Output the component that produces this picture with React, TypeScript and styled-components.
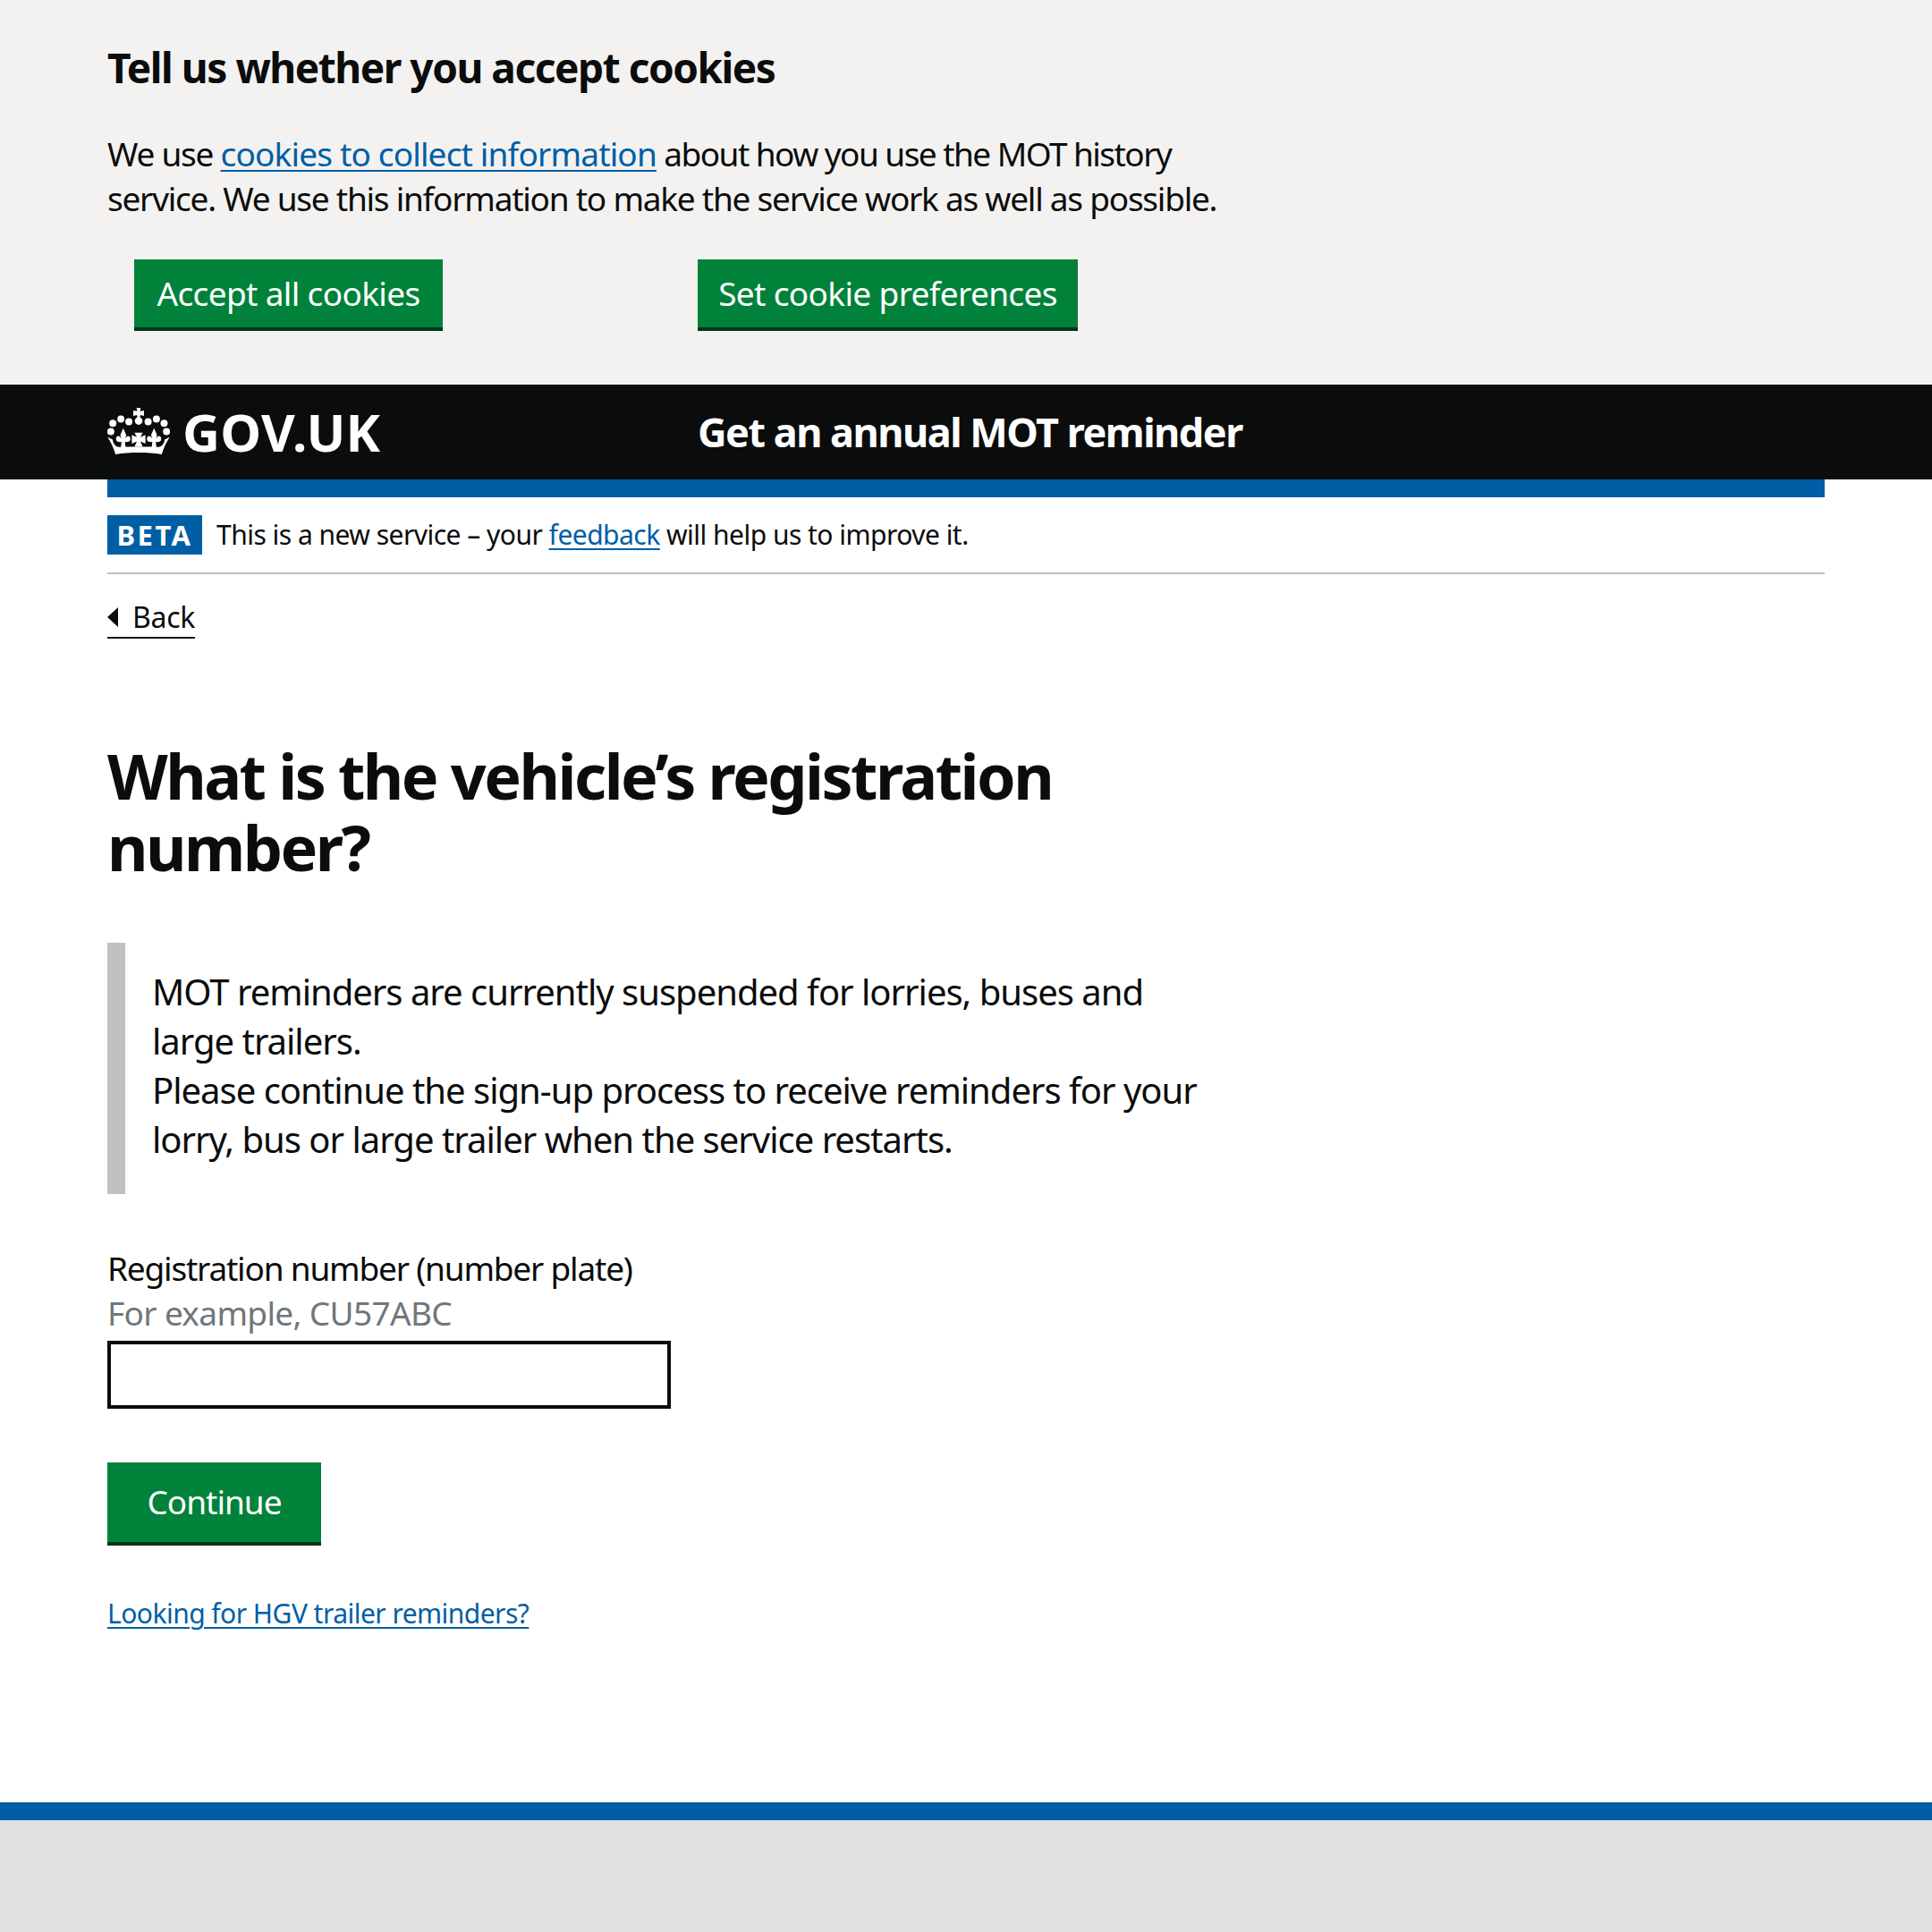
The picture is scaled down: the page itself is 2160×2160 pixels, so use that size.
import { createGlobalStyle, styled } from "styled-components";

const colors = {
	text: "#0b0c0c",
	link: "#005ea5",
	green: "#00823b",
	greenDark: "#003618",
	grey: "#6f777b",
	border: "#bfc1c3",
	panel: "#f3f2f1",
	footer: "#dee0e2",
};

const GlobalStyle = createGlobalStyle`
	html, body {
		margin: 0;
		padding: 0;
		background: #fff;
		color: ${colors.text};
		font-family: "Noto Sans", "Open Sans", sans-serif;
	}
	* {
		box-sizing: border-box;
	}
`;

const Page = styled.div`
	width: 2160px;
	height: 2160px;
	overflow: hidden;
	display: flex;
	flex-direction: column;
`;

const CookieBanner = styled.section`
	height: 430px;
	padding: 48px 120px 0;
	background: ${colors.panel};
`;

const CookieTitle = styled.h2`
	margin: 0 0 44px;
	font-size: 46px;
	line-height: 55px;
	font-weight: 700;
	letter-spacing: -1.46px;
`;

const CookieText = styled.p`
	margin: 0 0 43px;
	width: 1300px;
	font-size: 37px;
	line-height: 50px;
	letter-spacing: -1.24px;
`;

const TextLink = styled.a`
	color: ${colors.link};
	text-decoration: underline;
	text-decoration-thickness: 2px;
	text-underline-offset: 4px;
`;

const CookieLink = styled(TextLink)`
	letter-spacing: -0.84px;
`;

const CookieTextTight = styled.span`
	letter-spacing: -1.55px;
`;

const CookieButtons = styled.div`
	display: flex;
	gap: 285px;
	padding-left: 30px;
`;

const Button = styled.button<{ $width: number; $tall?: boolean }>`
	width: ${(p) => p.$width}px;
	height: ${(p) => (p.$tall ? "93px" : "80px")};
	padding: 0 0 2px;
	border: 0;
	border-bottom: 4px solid ${colors.greenDark};
	background: ${colors.green};
	color: #fff;
	font-family: inherit;
	font-size: 37px;
	letter-spacing: ${(p) => (p.$tall ? "-1px" : "-0.65px")};
`;

const Header = styled.header`
	height: 106px;
	padding: 0 120px 2px;
	display: flex;
	align-items: center;
	background: ${colors.text};
	color: #fff;
`;

const Logo = styled.div`
	width: 660px;
	display: flex;
	align-items: center;
	gap: 14px;
	font-size: 58px;
	font-weight: 700;
	letter-spacing: 0.3px;
	svg {
		width: 70px;
		height: 52px;
	}
`;

const ServiceName = styled.div`
	font-size: 45px;
	font-weight: 700;
	letter-spacing: -1.5px;
`;

const Main = styled.main`
	flex: 1;
	padding: 0 120px;
`;

const BlueRule = styled.div`
	height: 20px;
	background: ${colors.link};
`;

const PhaseBanner = styled.div`
	height: 86px;
	padding-top: 20px;
	display: flex;
	align-items: flex-start;
	gap: 16px;
	border-bottom: 2px solid ${colors.border};
	font-size: 30px;
	line-height: 44px;
	letter-spacing: -0.52px;
`;

const PhaseTag = styled.strong`
	width: 106px;
	height: 44px;
	background: ${colors.link};
	color: #fff;
	font-size: 31px;
	text-align: center;
	letter-spacing: 2.5px;
`;

const BackLink = styled.a`
	display: inline-flex;
	align-items: center;
	gap: 16px;
	margin-top: 24px;
	height: 48px;
	border-bottom: 2px solid ${colors.text};
	font-size: 32px;
	letter-spacing: -0.3px;
	&::before {
		content: "";
		margin-top: 2px;
		border-style: solid;
		border-width: 11px 12px 11px 0;
		border-color: transparent ${colors.text} transparent transparent;
	}
`;

const Title = styled.h1`
	margin: 113px 0 67px;
	width: 1200px;
	font-size: 70px;
	line-height: 80px;
	font-weight: 700;
	letter-spacing: -2.5px;
`;

const Inset = styled.div`
	width: 1240px;
	height: 281px;
	padding: 27px 0 0 30px;
	border-left: 20px solid ${colors.border};
	font-size: 40px;
	line-height: 55px;
	letter-spacing: -1px;
`;

const Label = styled.label`
	display: block;
	margin-top: 58px;
	font-size: 37px;
	line-height: 50px;
	letter-spacing: -1.2px;
`;

const Hint = styled.div`
	color: ${colors.grey};
	font-size: 37px;
	line-height: 50px;
	letter-spacing: -0.65px;
`;

const TextInput = styled.input`
	display: block;
	width: 630px;
	height: 76px;
	margin: 6px 0 60px;
	border: 4px solid ${colors.text};
	background: #fff;
`;

const TrailerLink = styled.div`
	margin-top: 54px;
	font-size: 30px;
	line-height: 44px;
	letter-spacing: -0.53px;
`;

const Footer = styled.footer`
	height: 145px;
	border-top: 20px solid ${colors.link};
	background: ${colors.footer};
`;

const crownDots = [
	[87, 62],
	[152, 62],
	[60, 53],
	[180, 53],
	[33, 67],
	[206, 67],
	[26, 95],
	[214, 95],
];

function Fleur({ x }: { x: number }) {
	return (
		<path d={`M${x} 84 L${x + 10} 106 L${x + 6} 120 C${x + 12} 106 ${x + 26} 108 ${x + 24} 122 C${x + 22} 132 ${x + 10} 130 ${x + 6} 130 L${x + 8} 150 H${x - 8} L${x - 6} 130 C${x - 10} 130 ${x - 22} 132 ${x - 24} 122 C${x - 26} 108 ${x - 12} 106 ${x - 6} 120 L${x - 10} 106 Z`} />
	);
}

function Crown() {
	return (
		<svg viewBox="15 15 210 157" fill="currentColor" aria-hidden="true">
			<path d="M113 15 H127 L125 26 L138 24 V42 L126 39 L124 46 C130 50 133 54 133 59 A13 13 0 0 1 107 59 C107 54 110 50 116 46 L114 39 L102 42 V24 L115 26 Z" />
			{crownDots.map(([cx, cy]) => (
				<circle cx={cx} cy={cy} r={12} key={`${cx}-${cy}`} />
			))}
			<Fleur x={68} />
			<Fleur x={172} />
			<path d="M106 99 H134 L126 114 L143 106 V136 L126 128 L134 146 H106 L114 128 L97 136 V106 L114 114 Z" />
			<path d="M15 113 L32 122 C36 146 52 150 66 146 H174 C188 150 204 146 208 122 L225 113 C212 134 204 150 198 172 C150 164 90 164 42 172 C36 150 28 134 15 113 Z" />
		</svg>
	);
}

function App() {
	return (
		<Page>
			<GlobalStyle />
			<CookieBanner>
				<CookieTitle>Tell us whether you accept cookies</CookieTitle>
				<CookieText>
					We use <CookieLink>cookies to collect information</CookieLink> <CookieTextTight>about how you use the MOT history</CookieTextTight> service. We use this information to make the service work as well as possible.
				</CookieText>
				<CookieButtons>
					<Button $width={345}>Accept all cookies</Button>
					<Button $width={425}>Set cookie preferences</Button>
				</CookieButtons>
			</CookieBanner>
			<Header>
				<Logo>
					<Crown />
					GOV.UK
				</Logo>
				<ServiceName>Get an annual MOT reminder</ServiceName>
			</Header>
			<Main>
				<BlueRule />
				<PhaseBanner>
					<PhaseTag>BETA</PhaseTag>
					<span>
						This is a new service – your <TextLink>feedback</TextLink> will help us to improve it.
					</span>
				</PhaseBanner>
				<BackLink>Back</BackLink>
				<Title>What is the vehicle’s registration number?</Title>
				<Inset>
					MOT reminders are currently suspended for lorries, buses and large trailers.
					<br />
					Please continue the sign-up process to receive reminders for your lorry, bus or large trailer when the service restarts.
				</Inset>
				<Label>Registration number (number plate)</Label>
				<Hint>For example, CU57ABC</Hint>
				<TextInput />
				<Button $width={239} $tall>
					Continue
				</Button>
				<TrailerLink>
					<TextLink>Looking for HGV trailer reminders?</TextLink>
				</TrailerLink>
			</Main>
			<Footer />
		</Page>
	);
}

export default App;
